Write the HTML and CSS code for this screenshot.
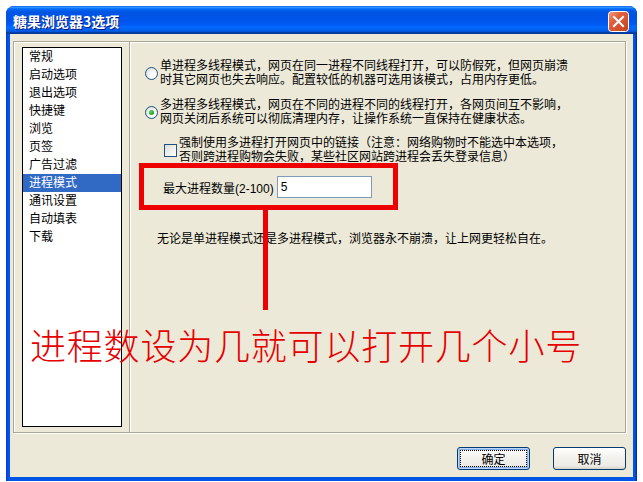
FILE: index.html
```html
<!DOCTYPE html>
<html>
    <head>
        <meta charset="utf-8">
        <title>糖果浏览器3选项</title>
        <link rel="stylesheet" href="styles.css">
    </head>
    <body>
        <div class="window">
            <div class="titlebar">
                <span class="title">糖果浏览器3选项</span>
                <span class="close">
                    <svg width="21" height="21" viewBox="0 0 21 21">
                        <defs>
                            <linearGradient id="cg" x1="0" y1="0" x2="1" y2="1">
                                <stop offset="0" stop-color="#F0A088"/>
                                <stop offset="0.35" stop-color="#E2603C"/>
                                <stop offset="1" stop-color="#C2401C"/>
                            </linearGradient>
                        </defs>
                        <rect x="0.5" y="0.5" width="20" height="20" rx="3" fill="url(#cg)" stroke="#fff"/>
                        <path d="M6 6 L15 15 M15 6 L6 15" stroke="#fff" stroke-width="2" stroke-linecap="square"/>
                    </svg>
                </span>
            </div>
            <div class="client">
                <div class="panel">
                    <ul class="nav">
                        <li>常规</li>
                        <li>启动选项</li>
                        <li>退出选项</li>
                        <li>快捷键</li>
                        <li>浏览</li>
                        <li>页签</li>
                        <li>广告过滤</li>
                        <li class="selected">进程模式</li>
                        <li>通讯设置</li>
                        <li>自动填表</li>
                        <li>下载</li>
                    </ul>
                    <div class="sep"></div>
                    <div class="content">
                        <div class="option">
                            <span class="radio"></span>
                            <p>单进程多线程模式，网页在同一进程不同线程打开，可以防假死，但网页崩溃<br>时其它网页也失去响应。配置较低的机器可选用该模式，占用内存更低。</p>
                        </div>
                        <div class="option second">
                            <span class="radio checked"></span>
                            <p>多进程多线程模式，网页在不同的进程不同的线程打开，各网页间互不影响，<br>网页关闭后系统可以彻底清理内存，让操作系统一直保持在健康状态。</p>
                        </div>
                        <div class="option check-option">
                            <span class="checkbox"></span>
                            <p>强制使用多进程打开网页中的链接（注意：网络购物时不能选中本选项，<br>否则跨进程购物会失败，某些社区网站跨进程会丢失登录信息）</p>
                        </div>
                        <div class="field">
                            <label>最大进程数量(2-100)</label>
                            <input type="text" value="5">
                        </div>
                        <p class="note">无论是单进程模式还是多进程模式，浏览器永不崩溃，让上网更轻松自在。</p>
                    </div>
                </div>
                <div class="buttons">
                    <button class="default">确定</button>
                    <button>取消</button>
                </div>
            </div>
            <div class="mark-box"></div>
            <div class="mark-line"></div>
            <div class="mark-text">进程数设为几就可以打开几个小号</div>
        </div>
    </body>
</html>
```

FILE: styles.css
```css
* {
    box-sizing: border-box;
}

html, body {
    margin: 0;
    padding: 0;
    background: #fff;
    font-family: "Liberation Sans", "Noto Sans CJK SC", sans-serif;
    font-size: 12px;
    color: #000;
}

.window {
    position: relative;
    margin: 6px 0 0 6px;
    width: 631px;
    height: 475px;
    display: flex;
    flex-direction: column;
    background: linear-gradient(to right, #0831D9, #0055E5 2px, #0055E5 calc(100% - 2px), #001EA0);
    border-radius: 8px 8px 0 0;
    overflow: hidden;
}

.titlebar {
    height: 28px;
    flex: none;
    display: flex;
    align-items: center;
    justify-content: space-between;
    padding: 0 8px 0 7px;
    background: linear-gradient(to bottom, #0058EE 0%, #3593FF 4%, #288EFF 6%, #127DFF 8%, #036FFC 10%, #0262EE 14%, #0057E5 20%, #0054E3 24%, #0055EB 56%, #005BF5 66%, #026AFE 76%, #0062EF 86%, #0052D6 92%, #0040AB 94%, #003092 100%);
}

.title {
    color: #fff;
    font-family: "Noto Sans CJK SC", sans-serif;
    font-weight: bold;
    font-size: 14px;
    text-shadow: 1px 1px #0A1883;
    margin-top: 1px;
}

.close {
    width: 21px;
    height: 21px;
    margin-top: 2px;
    display: flex;
}

.client {
    flex: 1;
    margin: 0 4px 4px;
    background: #ECE9D8;
    padding: 7px 7px 0 3px;
    display: flex;
    flex-direction: column;
}

.panel {
    height: 392px;
    display: flex;
    border: 1px solid #ACA899;
    box-shadow: inset 1px 1px #fff, 1px 1px #fff;
}

.nav {
    list-style: none;
    margin: 5px 0 5px 8px;
    padding: 0;
    width: 100px;
    border: 1px solid #000;
    background: #fff;
}

.nav li {
    height: 18px;
    line-height: 18px;
    padding-left: 6px;
}

.nav li.selected {
    background: #316AC5;
    color: #fff;
}

.sep {
    width: 2px;
    margin-left: 7px;
    border-left: 1px solid #ACA899;
    border-right: 1px solid #fff;
}

.content {
    flex: 1;
    padding: 17px 0 0 14px;
}

.content p {
    margin: 0;
    line-height: 14px;
}

.option {
    display: flex;
    align-items: center;
}

.option.second {
    margin-top: 11px;
}

.option.check-option {
    margin-top: 10px;
    padding-left: 19px;
}

.radio {
    width: 13px;
    height: 13px;
    flex: none;
    margin-right: 2px;
    border: 1px solid #1C5180;
    border-radius: 50%;
    background: radial-gradient(circle at 70% 70%, #fff 20%, #DCDCD7 90%);
    display: flex;
    align-items: center;
    justify-content: center;
}

.radio.checked::after {
    content: "";
    width: 5px;
    height: 5px;
    border-radius: 50%;
    background: radial-gradient(circle at 35% 35%, #55D551, #21A121 70%);
}

.checkbox {
    width: 13px;
    height: 13px;
    flex: none;
    margin-right: 2px;
    border: 1px solid #1C5180;
    background: linear-gradient(135deg, #DCDCD7, #fff);
}

.field {
    margin-top: 12px;
    display: flex;
    align-items: center;
    padding-left: 18px;
}

.field input {
    margin-left: 3px;
    width: 95px;
    height: 22px;
    border: 1px solid #7F9DB9;
    padding: 0 3px;
    font-family: "Liberation Sans", sans-serif;
    font-size: 12px;
    outline: none;
}

.note {
    margin-top: 34px !important;
    padding-left: 12px;
}

.buttons {
    margin-top: 14px;
    display: flex;
    justify-content: flex-end;
    gap: 23px;
    padding-right: 0;
}

.buttons button {
    width: 73px;
    height: 23px;
    border: 1px solid #003C74;
    border-radius: 3px;
    background: linear-gradient(#fff, #F4F3EE 40%, #ECEBE6 85%, #D6D0C5);
    font-family: "Liberation Sans", "Noto Sans CJK SC", sans-serif;
    font-size: 12px;
    padding: 0;
}

.buttons button.default {
    box-shadow: inset 0 0 0 1px #BBD6F8, inset 0 0 0 2px #89ADE4;
    outline: 1px dotted #000;
    outline-offset: -4px;
}

.mark-box {
    position: absolute;
    left: 133px;
    top: 157px;
    width: 259px;
    height: 47px;
    border: 5px solid #EE0000;
}

.mark-line {
    position: absolute;
    left: 257px;
    top: 204px;
    width: 5px;
    height: 100px;
    background: #EE0000;
}

.mark-text {
    position: absolute;
    left: 24px;
    top: 320px;
    font-family: "Noto Sans CJK SC", sans-serif;
    font-weight: 300;
    font-size: 36px;
    line-height: 37px;
    letter-spacing: 0.8px;
    color: #E60000;
    white-space: nowrap;
}
```
